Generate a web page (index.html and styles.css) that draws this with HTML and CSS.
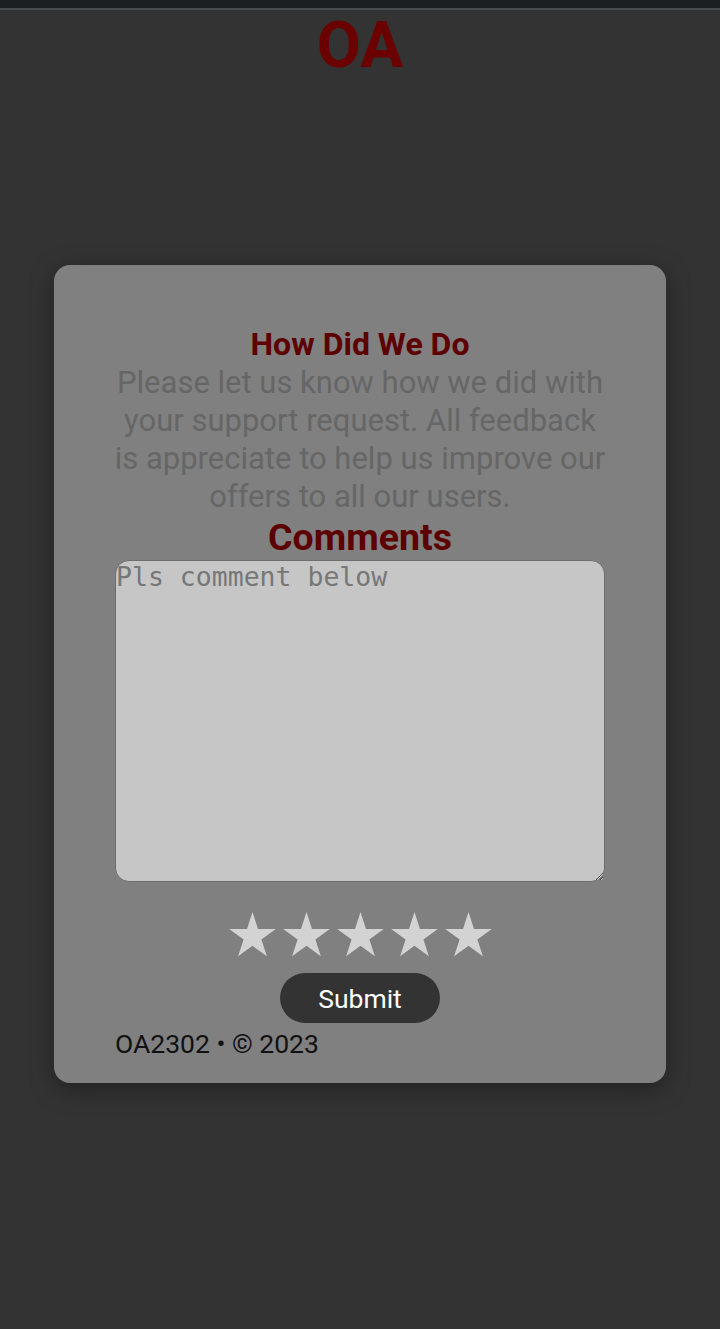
FILE: index.html
```html
<!DOCTYPE html>
<html lang="en">
<head>
<meta charset="utf-8">
<title>OA Feedback</title>
<link rel="stylesheet" href="styles.css">
</head>
<body>
<div class="topbar"></div>
<header class="brand">OA</header>
<main class="card">
  <h2 class="title">How Did We Do</h2>
  <p class="intro">Please let us know how we did with your support request. All feedback is appreciate to help us improve our offers to all our users.</p>
  <h3 class="label">Comments</h3>
  <textarea class="comment" placeholder="Pls comment below"></textarea>
  <div class="stars">
    <svg class="star" viewBox="0 0 48 46"><polygon points="24,0 29.6,17.3 47.8,17.3 33.1,28 38.7,45.3 24,34.6 9.3,45.3 14.9,28 0.2,17.3 18.4,17.3"/></svg>
    <svg class="star" viewBox="0 0 48 46"><polygon points="24,0 29.6,17.3 47.8,17.3 33.1,28 38.7,45.3 24,34.6 9.3,45.3 14.9,28 0.2,17.3 18.4,17.3"/></svg>
    <svg class="star" viewBox="0 0 48 46"><polygon points="24,0 29.6,17.3 47.8,17.3 33.1,28 38.7,45.3 24,34.6 9.3,45.3 14.9,28 0.2,17.3 18.4,17.3"/></svg>
    <svg class="star" viewBox="0 0 48 46"><polygon points="24,0 29.6,17.3 47.8,17.3 33.1,28 38.7,45.3 24,34.6 9.3,45.3 14.9,28 0.2,17.3 18.4,17.3"/></svg>
    <svg class="star" viewBox="0 0 48 46"><polygon points="24,0 29.6,17.3 47.8,17.3 33.1,28 38.7,45.3 24,34.6 9.3,45.3 14.9,28 0.2,17.3 18.4,17.3"/></svg>
  </div>
  <button class="submit" type="button">Submit</button>
  <footer class="foot">OA2302 • © 2023</footer>
</main>
</body>
</html>
```
FILE: styles.css
```css
html, body {
  margin: 0;
  padding: 0;
}
body {
  background: #333333;
  font-family: Roboto, "Liberation Sans", sans-serif;
  min-height: 1329px;
}
.topbar {
  height: 8px;
  background: #1b1f22;
  border-bottom: 2px solid #484c4f;
}
.brand {
  text-align: center;
  font-weight: 700;
  font-size: 64px;
  line-height: 72px;
  color: #6b0000;
  margin: 0;
  height: 72px;
}
.card {
  width: 612px;
  box-sizing: border-box;
  margin: 183px auto 0;
  background: #808080;
  border-radius: 16px;
  box-shadow: 0 6px 24px rgba(0, 0, 0, 0.35);
  padding: 61px 61px 24px;
  display: flex;
  flex-direction: column;
  align-items: center;
}
.title {
  margin: 0;
  font-size: 32px;
  font-weight: 700;
  line-height: 36px;
  color: #5c0000;
  text-align: center;
}
.intro {
  margin: 2px -4px 0;
  font-size: 31px;
  line-height: 38px;
  color: #666666;
  text-align: center;
}
.label {
  margin: 1px 0 0;
  font-size: 37.5px;
  line-height: 40px;
  font-weight: 700;
  color: #5c0000;
  text-align: center;
}
.comment {
  display: block;
  width: 490px;
  height: 322px;
  box-sizing: border-box;
  margin: 3px 0 0;
  padding: 0;
  background: #c6c6c6;
  border: 1.5px solid #6e6e6e;
  border-radius: 14px;
  font-family: "DejaVu Sans Mono", monospace;
  font-size: 26.5px;
  line-height: 32px;
  color: #333;
  resize: vertical;
}
.comment::placeholder {
  color: #777777;
}
.stars {
  display: flex;
  gap: 7px;
  margin-top: 30px;
}
.star {
  width: 47px;
  height: 45px;
  fill: #d3d3d3;
}
.submit {
  margin-top: 16px;
  width: 160px;
  height: 50px;
  border: none;
  border-radius: 25px;
  background: #333333;
  color: #ffffff;
  font-family: Roboto, "Liberation Sans", sans-serif;
  font-size: 26.5px;
}
.foot {
  align-self: flex-start;
  margin-top: 6px;
  font-size: 26.5px;
  line-height: 30px;
  color: #111111;
}
```
